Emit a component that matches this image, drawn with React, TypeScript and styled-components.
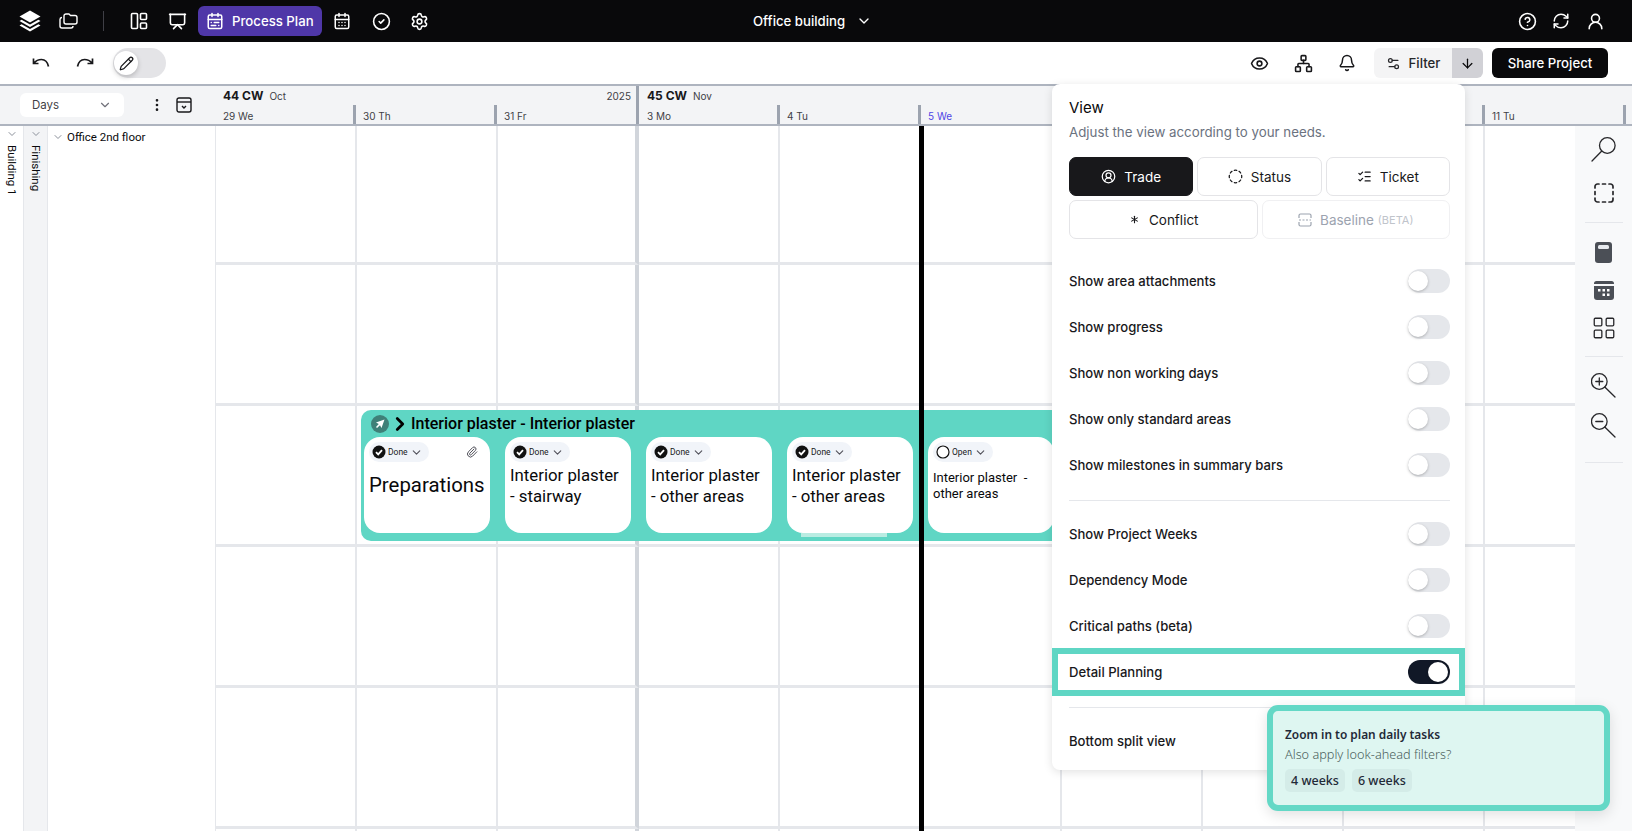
import React from "react"
import styled, { createGlobalStyle } from "styled-components"
import {
    ArrowDown, Asterisk, Bell, CalendarDays, CalendarRange, ChevronDown, ChevronRight, CircleCheck, CircleDashed,
    CircleHelp, CircleUserRound, EllipsisVertical, Eye, LayoutGrid, ListChecks, Network, Paperclip, Pencil,
    Presentation, RefreshCw, Settings, Settings2, UserRound,
} from "lucide-react"

const GlobalStyle = createGlobalStyle`
    html, body { margin: 0; padding: 0; background: #fff; }
    * { box-sizing: border-box; }
    body { font-family: Inter, "Liberation Sans", sans-serif; color: #09090b; }
`;

const StackLogo = () => (
    <svg width="24" height="24" viewBox="0 0 24 24" fill="#fff">
        <path d="M12 1.500 22.500 7.500 12 13.500 1.500 7.500z" />
        <path d="M3.600 10.800 12 15.600l8.400-4.800 2.100 1.200L12 18 1.500 12z" />
        <path d="M3.600 15.300 12 20.100l8.400-4.800 2.100 1.200L12 22.500 1.500 16.500z" />
    </svg>
);

const FilesIcon = () => (
    <svg width="19" height="16" viewBox="0 0 19 16" fill="none" stroke="#fff" strokeWidth="1.400" strokeLinejoin="round">
        <path d="M5 3a2 2 0 0 1 2-2h3l1.500 1.500H16a2 2 0 0 1 2 2V9a2 2 0 0 1-2 2H7a2 2 0 0 1-2-2z" />
        <path d="M3 4.500H2.800a2 2 0 0 0-1.800 2V13a2 2 0 0 0 2 2h9a2 2 0 0 0 2-2" />
    </svg>
);

const BoardsIcon = () => (
    <svg width="18" height="18" viewBox="0 0 18 18" fill="none" stroke="#fff" strokeWidth="1.600">
        <rect x="1.500" y="1.500" width="6" height="15" rx="1" />
        <rect x="10.500" y="1.500" width="6" height="6" rx="1" />
        <rect x="10.500" y="11" width="6" height="5.500" rx="1" />
    </svg>
);

const BoxIcon = () => (
    <svg width="16" height="16" viewBox="0 0 16 16" fill="none" stroke="#18181b" strokeWidth="1.400">
        <rect x="1" y="1" width="14" height="14" rx="2" />
        <path d="M1 5h14" />
        <path d="m6 9 2 2 2-2" />
    </svg>
);

const BaselineIcon = () => (
    <svg width="14" height="14" viewBox="0 0 14 14" fill="none" stroke="#9ca3af" strokeWidth="1.200">
        <path d="M1 5V2.500A1.500 1.500 0 0 1 2.500 1h9A1.500 1.500 0 0 1 13 2.500V5M1 9v2.500A1.500 1.500 0 0 0 2.500 13h9a1.500 1.500 0 0 0 1.500-1.500V9" />
        <path d="M1 7h12" strokeDasharray="2 1.500" />
    </svg>
);

const SearchLeftIcon = () => (
    <svg width="25" height="25" viewBox="0 0 25 25" fill="none" stroke="#27272a" strokeWidth="1.300" strokeLinecap="round">
        <circle cx="16.300" cy="8.500" r="7.800" />
        <path d="M10.800 14 1 24" />
    </svg>
);

const DashedSquareIcon = () => (
    <svg width="20" height="20" viewBox="0 0 20 20" fill="none" stroke="#27272a" strokeWidth="1.700" strokeLinecap="round">
        <path d="M1 5V3.500A2.500 2.500 0 0 1 3.500 1H5M15 1h1.500A2.500 2.500 0 0 1 19 3.500V5M19 15v1.500a2.500 2.500 0 0 1-2.500 2.500H15M5 19H3.500A2.500 2.500 0 0 1 1 16.500V15" />
        <path d="M8.500 1h3M19 8.500v3M8.500 19h3M1 8.500v3" />
    </svg>
);

const NotesIcon = () => (
    <svg width="17" height="21" viewBox="0 0 17 21">
        <rect x="0" y="0" width="17" height="21" rx="3" fill="#4b4f56" />
        <rect x="3" y="3" width="11" height="4" rx="1.500" fill="#e8ebef" />
    </svg>
);

const CalendarFilledIcon = () => (
    <svg width="20" height="19" viewBox="0 0 20 19">
        <path d="M2.500 0h15A2.500 2.500 0 0 1 20 2.500V3H0v-.5A2.500 2.500 0 0 1 2.500 0z" fill="#4b4f56" />
        <path d="M0 5h20v11a3 3 0 0 1-3 3H3a3 3 0 0 1-3-3z" fill="#4b4f56" />
        <g fill="#fff">
            <rect x="4" y="8" width="2.500" height="2.500" />
            <rect x="8.500" y="8" width="2.500" height="2.500" />
            <rect x="13" y="8" width="2.500" height="2.500" />
            <rect x="8.500" y="12.500" width="2.500" height="2.500" />
            <rect x="13" y="12.500" width="2.500" height="2.500" />
        </g>
    </svg>
);

const ZoomGlass = ({ plus }: { plus?: boolean }) => (
    <svg width="25" height="25" viewBox="0 0 25 25" fill="none" stroke="#27272a" strokeWidth="1.300" strokeLinecap="round">
        <circle cx="8.300" cy="8.500" r="7.800" />
        <path d="M13.800 14 24 24" />
        <path d="M4.800 8.500h7" />
        {plus && <path d="M8.300 5v7" />}
    </svg>
);

const StatusDone = () => (
    <svg width="14" height="14" viewBox="0 0 14 14">
        <circle cx="7" cy="7" r="6.500" fill="#111" />
        <path d="m4 7.200 2.200 2.200L10 5.200" fill="none" stroke="#fff" strokeWidth="1.800" />
    </svg>
);

const StatusOpen = () => (
    <svg width="14" height="14" viewBox="0 0 14 14">
        <circle cx="7" cy="7" r="6" fill="#fff" stroke="#111" strokeWidth="1.200" />
    </svg>
);

const days44 = ["29 We", "30 Th", "31 Fr"];
// the days between 5 We and 11 Tu sit behind the view panel
const days45 = ["3 Mo", "4 Tu", "5 We", "", "", "", "11 Tu", ""];

const viewModes = [
    { label: "Trade", icon: <CircleUserRound size={15} />, active: true },
    { label: "Status", icon: <CircleDashed size={15} /> },
    { label: "Ticket", icon: <ListChecks size={15} /> },
];

const firstToggles = [
    "Show area attachments",
    "Show progress",
    "Show non working days",
    "Show only standard areas",
    "Show milestones in summary bars",
];

const secondToggles = ["Show Project Weeks", "Dependency Mode", "Critical paths (beta)"];

const cards = [
    { title: "Preparations", size: "big", status: "Done", clip: true },
    { title: "Interior plaster - stairway", size: "mid", status: "Done" },
    { title: "Interior plaster - other areas", size: "mid", status: "Done" },
    { title: "Interior plaster - other areas", size: "mid", status: "Done", stacked: true },
    { title: "Interior plaster  - other areas", size: "small", status: "Open" },
];

export default function App() {
    return (
        <Page>
            <GlobalStyle />
            <TopBar>
                <TopGroup>
                    <TopIcon $w={38}><StackLogo /></TopIcon>
                    <TopIcon $w={38}><FilesIcon /></TopIcon>
                    <TopDivider />
                    <TopIcon $w={38}><BoardsIcon /></TopIcon>
                    <TopIcon $w={38}><Presentation size={19} color="#fff" /></TopIcon>
                    <ActiveTab>
                        <CalendarRange size={18} color="#fff" />
                        Process Plan
                    </ActiveTab>
                    <TopIcon $w={40}><CalendarDays size={18} color="#fff" /></TopIcon>
                    <TopIcon $w={38}><CircleCheck size={19} color="#fff" /></TopIcon>
                    <TopIcon $w={38}><Settings size={19} color="#fff" /></TopIcon>
                </TopGroup>
                <ProjectName>
                    Office building
                    <ChevronDown size={16} color="#fff" />
                </ProjectName>
                <TopGroup>
                    <TopIcon $w={34}><CircleHelp size={19} color="#fff" /></TopIcon>
                    <TopIcon $w={34}><RefreshCw size={18} color="#fff" /></TopIcon>
                    <TopIcon $w={34}><UserRound size={19} color="#fff" /></TopIcon>
                </TopGroup>
            </TopBar>

            <Toolbar>
                <ToolGroup>
                    <UndoIcon viewBox="0 0 18 12" fill="none" stroke="#18181b" strokeWidth="1.700">
                        <path d="M1.500 1.500v5h5M1.800 6.300C4 3.600 6.500 2.500 9.500 2.500c3.500 0 6 2.500 7 7" />
                    </UndoIcon>
                    <RedoIcon viewBox="0 0 18 12" fill="none" stroke="#18181b" strokeWidth="1.700">
                        <path d="M1.500 1.500v5h5M1.800 6.300C4 3.600 6.500 2.500 9.500 2.500c3.500 0 6 2.500 7 7" />
                    </RedoIcon>
                    <EditSwitch>
                        <EditKnob><Pencil size={15} color="#18181b" /></EditKnob>
                    </EditSwitch>
                </ToolGroup>
                <ToolGroup>
                    <ToolIcon><Eye size={19} /></ToolIcon>
                    <ToolIcon><Network size={19} /></ToolIcon>
                    <ToolIcon><Bell size={18} /></ToolIcon>
                    <FilterButton>
                        <FilterLabel><Settings2 size={15} />Filter</FilterLabel>
                        <FilterArrow><ArrowDown size={15} /></FilterArrow>
                    </FilterButton>
                    <ShareButton>Share Project</ShareButton>
                </ToolGroup>
            </Toolbar>

            <HeaderRow>
                <HeaderLeft>
                    <DaysSelect>Days<ChevronDown size={14} color="#71717a" /></DaysSelect>
                    <EllipsisVertical size={16} color="#18181b" />
                    <BoxIcon />
                </HeaderLeft>
                <Week $width={423}>
                    <WeekTop>
                        <WeekName>44 CW</WeekName>
                        <MonthName>Oct</MonthName>
                        <YearName>2025</YearName>
                    </WeekTop>
                    <DayRow>
                        {days44.map((d, i) => <Day key={i} $first={i === 0}>{d}</Day>)}
                    </DayRow>
                </Week>
                <Week $width={1128} $divided>
                    <WeekTop>
                        <WeekName>45 CW</WeekName>
                        <MonthName>Nov</MonthName>
                    </WeekTop>
                    <DayRow>
                        {days45.map((d, i) => <Day key={i} $first={i === 0} $today={d === "5 We"}>{d}</Day>)}
                    </DayRow>
                </Week>
            </HeaderRow>

            <Body>
                <Tree>
                    <TreeColumn>
                        <ChevronDown size={12} color="#8b909a" />
                        <TreeLabel>Building 1</TreeLabel>
                    </TreeColumn>
                    <TreeColumn $shaded>
                        <ChevronDown size={12} color="#8b909a" />
                        <TreeLabel>Finishing</TreeLabel>
                    </TreeColumn>
                    <TreeArea>
                        <ChevronDown size={12} color="#8b909a" />
                        Office 2nd floor
                    </TreeArea>
                </Tree>
                <GridWrap>
                    <CellGrid>
                        {Array.from({ length: 66 }).map((_, i) => (
                            <Cell key={i} $weekEnd={i % 11 === 2} />
                        ))}
                    </CellGrid>
                    <TaskBar>
                        <TaskHead>
                            <TaskBadge>
                                <svg width="10" height="10" viewBox="0 0 10 10" fill="#fff">
                                    <path d="M9.500.5 6.500 9 5 6.300 2 9 1 8l2.800-3L1 3.500z" />
                                </svg>
                            </TaskBadge>
                            <ChevronRight size={22} color="#000" strokeWidth={3} />
                            <TaskTitle>Interior plaster - Interior plaster</TaskTitle>
                        </TaskHead>
                        <TaskCards>
                            {cards.map((c, i) => (
                                <Card key={i} $stacked={c.stacked}>
                                    <CardTop>
                                        <StatusPill>
                                            {c.status === "Done" ? <StatusDone /> : <StatusOpen />}
                                            {c.status}
                                            <ChevronDown size={13} color="#52525b" />
                                        </StatusPill>
                                        {c.clip && <Paperclip size={12} color="#52525b" />}
                                    </CardTop>
                                    <CardTitle $size={c.size}>{c.title}</CardTitle>
                                </Card>
                            ))}
                        </TaskCards>
                    </TaskBar>
                    <TodayLine />
                </GridWrap>
                <Rail>
                    <RailGroup $gap={6}>
                        <RailIcon><SearchLeftIcon /></RailIcon>
                        <RailIcon><DashedSquareIcon /></RailIcon>
                    </RailGroup>
                    <RailDivider $top={10} $bottom={10} />
                    <RailGroup>
                        <RailIcon><NotesIcon /></RailIcon>
                        <RailIcon><CalendarFilledIcon /></RailIcon>
                        <RailIcon><LayoutGrid size={26} strokeWidth={1.200} /></RailIcon>
                    </RailGroup>
                    <RailDivider $top={9} $bottom={9} />
                    <RailGroup $gap={2}>
                        <RailIcon><ZoomGlass plus /></RailIcon>
                        <RailIcon><ZoomGlass /></RailIcon>
                    </RailGroup>
                    <RailDivider $top={18} $bottom={0} />
                </Rail>
            </Body>

            <ViewPanel>
                <PanelTitle>View</PanelTitle>
                <PanelSub>Adjust the view according to your needs.</PanelSub>
                <ModeRow $first>
                    {viewModes.map(m => (
                        <ModeButton key={m.label} $active={m.active}>{m.icon}{m.label}</ModeButton>
                    ))}
                </ModeRow>
                <ModeRow>
                    <ModeButton><Asterisk size={13} />Conflict</ModeButton>
                    <ModeButton $disabled><BaselineIcon />Baseline <BetaTag>(BETA)</BetaTag></ModeButton>
                </ModeRow>
                <ToggleList>
                    {firstToggles.map(t => (
                        <ToggleRow key={t}>{t}<Toggle /></ToggleRow>
                    ))}
                </ToggleList>
                <PanelDivider />
                <ToggleList $tight>
                    {secondToggles.map(t => (
                        <ToggleRow key={t}>{t}<Toggle /></ToggleRow>
                    ))}
                </ToggleList>
                <Highlighted>
                    Detail Planning
                    <Toggle $on />
                </Highlighted>
                <PanelDivider $after />
                <ToggleRow>Bottom split view</ToggleRow>
            </ViewPanel>

            <Toast>
                <ToastTitle>Zoom in to plan daily tasks</ToastTitle>
                <ToastSub>Also apply look-ahead filters?</ToastSub>
                <ToastChips>
                    <ToastChip>4 weeks</ToastChip>
                    <ToastChip>6 weeks</ToastChip>
                </ToastChips>
            </Toast>
        </Page>
    )
}

const Page = styled.div`
    position: relative;
    width: 1632px;
    height: 831px;
    overflow: hidden;
    display: flex;
    flex-direction: column;
`;

const TopBar = styled.header`
    height: 42px;
    flex: none;
    background: #09090b;
    display: flex;
    align-items: center;
    justify-content: space-between;
    padding: 0 20px 0 11px;
`;

const TopGroup = styled.div`
    display: flex;
    align-items: center;
`;

const TopIcon = styled.span<{ $w: number }>`
    width: ${p => p.$w}px;
    height: 30px;
    display: flex;
    align-items: center;
    justify-content: center;
`;

const TopDivider = styled.span`
    width: 1px;
    height: 20px;
    background: #3f3f46;
    margin: 0 16px;
`;

const ActiveTab = styled.div`
    width: 124px;
    height: 30px;
    margin-left: 2px;
    padding-left: 8px;
    display: flex;
    align-items: center;
    gap: 8px;
    background: #4f37a8;
    border-radius: 6px;
    color: #fff;
    font-size: 13.2px;
    font-weight: 500;
`;

const ProjectName = styled.div`
    position: absolute;
    left: 753px;
    top: 0;
    height: 42px;
    display: flex;
    align-items: center;
    gap: 11px;
    color: #fff;
    font-size: 13.2px;
    font-weight: 500;
`;

const Toolbar = styled.div`
    height: 42px;
    flex: none;
    background: #fff;
    display: flex;
    align-items: center;
    justify-content: space-between;
    padding: 0 24px 0 32px;
`;

const ToolGroup = styled.div`
    display: flex;
    align-items: center;
`;

const UndoIcon = styled.svg`
    width: 18px;
    height: 12px;
    margin-right: 26px;
`;

const RedoIcon = styled(UndoIcon)`
    transform: scaleX(-1);
    margin-right: 19px;
`;

const EditSwitch = styled.div`
    width: 53px;
    height: 30px;
    background: #e4e4e7;
    border-radius: 15px;
    display: flex;
    align-items: center;
    padding-left: 1px;
`;

const EditKnob = styled.span`
    width: 24px;
    height: 24px;
    background: #fff;
    border-radius: 50%;
    box-shadow: 0 2px 5px rgba(0, 0, 0, 0.2);
    display: flex;
    align-items: center;
    justify-content: center;
`;

const ToolIcon = styled.span`
    width: 44px;
    display: flex;
    justify-content: center;
    color: #18181b;
`;

const FilterButton = styled.div`
    display: flex;
    height: 30px;
    margin-left: 5px;
    margin-right: 9px;
    border-radius: 6px;
    overflow: hidden;
    font-size: 13.2px;
    font-weight: 500;
`;

const FilterLabel = styled.div`
    width: 78px;
    background: #f4f4f5;
    display: flex;
    align-items: center;
    justify-content: center;
    gap: 8px;
    color: #27272a;
`;

const FilterArrow = styled.div`
    width: 31px;
    background: #d1d1d6;
    display: flex;
    align-items: center;
    justify-content: center;
`;

const ShareButton = styled.button`
    width: 116px;
    height: 30px;
    padding: 0;
    border: none;
    border-radius: 6px;
    background: #09090b;
    color: #fff;
    font-family: inherit;
    font-size: 13.2px;
    font-weight: 500;
`;

const HeaderRow = styled.div`
    height: 42px;
    flex: none;
    display: flex;
    background: #f3f4f6;
    border-top: 2px solid #aeb4bf;
    border-bottom: 2px solid #aeb4bf;
`;

const HeaderLeft = styled.div`
    width: 215px;
    flex: none;
    display: flex;
    align-items: center;
    padding-left: 20px;
`;

const DaysSelect = styled.div`
    width: 104px;
    height: 24px;
    margin-right: 25px;
    padding: 0 12px;
    background: #fff;
    border-radius: 6px;
    display: flex;
    align-items: center;
    justify-content: space-between;
    font-size: 11.5px;
    color: #3f3f46;

    & + svg {
        margin-right: 11px;
    }
`;

const Week = styled.div<{ $width: number; $divided?: boolean }>`
    width: ${p => p.$width}px;
    flex: none;
    display: flex;
    flex-direction: column;
    ${p => p.$divided ? "border-left: 3px solid #9ca3af;" : ""}
    margin-left: ${p => p.$divided ? "-2px" : "0"};
`;

const WeekTop = styled.div`
    height: 19px;
    display: flex;
    align-items: flex-end;
    padding: 0 7px 1px 8px;
    gap: 6px;
`;

const WeekName = styled.span`
    font-size: 12px;
    font-weight: 700;
    line-height: 16px;
    color: #18181b;
`;

const MonthName = styled.span`
    font-size: 10px;
    line-height: 15px;
    color: #3f3f46;
`;

const YearName = styled.span`
    margin-left: auto;
    font-size: 10px;
    line-height: 15px;
    color: #3f3f46;
`;

const DayRow = styled.div`
    flex: 1;
    display: flex;
`;

const Day = styled.div<{ $first?: boolean; $today?: boolean }>`
    width: 141px;
    flex: none;
    border-left: ${p => p.$first ? "0" : "3px solid #9ca3af"};
    margin-left: ${p => p.$first ? "0" : "-3px"};
    padding: 4px 0 0 ${p => p.$first ? 8 : 7}px;
    font-size: 10px;
    line-height: 14px;
    color: ${p => p.$today ? "#4f46e5" : "#3f3f46"};
    & + & { width: 144px; }
`;

const Body = styled.div`
    flex: 1;
    min-height: 0;
    display: flex;
`;

const Tree = styled.div`
    width: 215px;
    flex: none;
    display: flex;
`;

const TreeColumn = styled.div<{ $shaded?: boolean }>`
    width: 24px;
    flex: none;
    padding-top: 2px;
    display: flex;
    flex-direction: column;
    align-items: center;
    gap: 5px;
    background: ${p => p.$shaded ? "#f3f4f6" : "#fff"};
    border-right: 1px solid #e5e7eb;
`;

const TreeLabel = styled.span`
    writing-mode: vertical-rl;
    font-family: Roboto, sans-serif;
    font-size: 11.5px;
    line-height: 14px;
`;

const TreeArea = styled.div`
    flex: 1;
    height: 22px;
    padding-left: 4px;
    display: flex;
    align-items: center;
    gap: 3px;
    font-family: Roboto, sans-serif;
    font-size: 11.5px;
`;

const GridWrap = styled.div`
    position: relative;
    flex: 1;
    min-width: 0;
    overflow: hidden;
`;

const CellGrid = styled.div`
    display: grid;
    grid-template-columns: repeat(11, 141px);
    grid-template-rows: 139px repeat(5, 141px);
    border-left: 1px solid #e5e7eb;
`;

const Cell = styled.div<{ $weekEnd?: boolean }>`
    border-bottom: 3px solid #e5e7eb;
    border-right: ${p => p.$weekEnd ? "4px solid #d1d5db" : "2px solid #e5e7eb"};
`;

const TaskBar = styled.div`
    position: absolute;
    left: 146px;
    top: 284px;
    width: 720px;
    height: 131px;
    background: #5fd6c4;
    border-radius: 10px 0 0 10px;
    padding: 0 3px;
`;

const TaskHead = styled.div`
    height: 27px;
    display: flex;
    align-items: center;
    padding-left: 7px;
`;

const TaskBadge = styled.span`
    width: 18px;
    height: 18px;
    border-radius: 50%;
    background: #3f8078;
    display: flex;
    align-items: center;
    justify-content: center;
`;

const TaskTitle = styled.span`
    font-family: Roboto, sans-serif;
    font-size: 16px;
    font-weight: 500;
    color: #000;
`;

const TaskCards = styled.div`
    display: flex;
    gap: 15px;
`;

const Card = styled.div<{ $stacked?: boolean }>`
    position: relative;
    width: 126px;
    height: 96px;
    flex: none;
    padding: 5px;
    background: #fff;
    border-radius: 16px;

    ${p => p.$stacked ? `
        &::after {
            content: "";
            position: absolute;
            left: 14px;
            right: 26px;
            bottom: -4px;
            height: 4px;
            background: #b9ece2;
        }
    ` : ""}
`;

const CardTop = styled.div`
    display: flex;
    align-items: center;
    justify-content: space-between;
    padding-right: 7px;
`;

const StatusPill = styled.div`
    height: 20px;
    padding: 0 6px 0 3px;
    display: flex;
    align-items: center;
    gap: 2px;
    background: #f1f4f9;
    border-radius: 10px;
    font-family: Roboto, sans-serif;
    font-size: 8.5px;
    color: #18181b;
`;

const cardFont: Record<string, string> = {
    big: "font-size: 20.4px; line-height: 26px; margin-top: 10px;",
    mid: "font-size: 16.8px; line-height: 21px; margin-top: 3px;",
    small: "font-size: 13px; line-height: 16px; margin-top: 8px;",
};

const CardTitle = styled.div<{ $size: string }>`
    font-family: Roboto, sans-serif;
    color: #09090b;
    white-space: pre-wrap;
    ${p => cardFont[p.$size]}
`;

const TodayLine = styled.div`
    position: absolute;
    left: 704px;
    top: 0;
    bottom: 0;
    width: 5px;
    background: #000;
`;

const Rail = styled.aside`
    width: 57px;
    flex: none;
    background: #f8f9fa;
    display: flex;
    flex-direction: column;
    align-items: center;
    padding-top: 4px;
`;

const RailGroup = styled.div<{ $gap?: number }>`
    display: flex;
    flex-direction: column;
    gap: ${p => p.$gap ?? 0}px;
`;

const RailIcon = styled.span`
    height: 38px;
    display: flex;
    align-items: center;
    justify-content: center;
    color: #27272a;
`;

const RailDivider = styled.hr<{ $top: number; $bottom: number }>`
    width: 38px;
    flex: none;
    margin: ${p => p.$top}px 0 ${p => p.$bottom}px;
    border: none;
    border-top: 1px solid #e5e7eb;
`;

const ViewPanel = styled.div`
    position: absolute;
    left: 1052px;
    top: 84px;
    width: 413px;
    height: 686px;
    padding: 14px 15px 14px 17px;
    background: #fff;
    border-radius: 8px;
    box-shadow: 0 2px 10px rgba(0, 0, 0, 0.12);
`;

const PanelTitle = styled.div`
    font-size: 15px;
    line-height: 20px;
    font-weight: 400;
`;

const PanelSub = styled.div`
    margin-top: 5px;
    font-size: 13.3px;
    line-height: 18px;
    color: #6b7280;
`;

const ModeRow = styled.div<{ $first?: boolean }>`
    display: flex;
    gap: 4px;
    margin-top: ${p => p.$first ? 16 : 4}px;
    margin-bottom: 0;
`;

const ModeButton = styled.div<{ $active?: boolean; $disabled?: boolean }>`
    flex: 1;
    height: 39px;
    display: flex;
    align-items: center;
    justify-content: center;
    gap: 8px;
    font-size: 13.5px;
    border-radius: 7px;
    border: 1px solid ${p => p.$active ? "#18181b" : p.$disabled ? "#f0f0f2" : "#e4e4e7"};
    background: ${p => p.$active ? "#18181b" : "#fff"};
    color: ${p => p.$active ? "#fff" : p.$disabled ? "#9ca3af" : "#18181b"};
`;

const BetaTag = styled.span`
    margin-left: -4px;
    font-size: 11px;
    color: #c0c4cb;
`;

const ToggleList = styled.div<{ $tight?: boolean }>`
    display: flex;
    flex-direction: column;
    gap: 22px;
    margin-top: ${p => p.$tight ? 21 : 30}px;
`;

const ToggleRow = styled.div`
    height: 24px;
    display: flex;
    align-items: center;
    justify-content: space-between;
    font-size: 13.1px;
    font-weight: 500;
    color: #18181b;
`;

const Toggle = styled.span<{ $on?: boolean }>`
    position: relative;
    width: 42px;
    height: 24px;
    border-radius: 12px;
    background: ${p => p.$on ? "#111827" : "#e5e7eb"};

    &::after {
        content: "";
        position: absolute;
        top: 2px;
        left: ${p => p.$on ? 20 : 0}px;
        width: 20px;
        height: 20px;
        border-radius: 50%;
        background: #fff;
        box-shadow: 0 1px 3px rgba(0, 0, 0, 0.25);
    }
`;

const PanelDivider = styled.div<{ $after?: boolean }>`
    height: 1px;
    background: #e5e7eb;
    margin-top: ${p => p.$after ? 11 : 23}px;
    margin-bottom: ${p => p.$after ? 21 : 0}px;
`;

const Highlighted = styled.div`
    height: 48px;
    margin: 10px -15px 0 -17px;
    padding: 0 9px 0 11px;
    display: flex;
    align-items: center;
    justify-content: space-between;
    border: 6px solid #5fd6c4;
    font-size: 13.1px;
    font-weight: 500;
    color: #18181b;
`;

const Toast = styled.div`
    position: absolute;
    left: 1267px;
    top: 705px;
    width: 343px;
    height: 106px;
    padding: 15px 12px 0;
    background: #def6f1;
    border: 6px solid #64d8c6;
    border-radius: 11px;
    box-shadow: 0 4px 14px rgba(0, 0, 0, 0.12);
    font-family: "Noto Sans", sans-serif;
`;

const ToastTitle = styled.div`
    font-size: 11.9px;
    line-height: 17px;
    font-weight: 600;
    color: #1f2937;
`;

const ToastSub = styled.div`
    margin-top: 3px;
    font-size: 12.7px;
    line-height: 16px;
    font-weight: 300;
    color: #4b5f5c;
`;

const ToastChips = styled.div`
    display: flex;
    gap: 7px;
    margin-top: 7px;
`;

const ToastChip = styled.span`
    height: 23px;
    padding: 0 6px;
    display: flex;
    align-items: center;
    border-radius: 5px;
    background: #d4ece8;
    font-size: 12.5px;
    font-weight: 500;
    color: #1f2937;
`;
